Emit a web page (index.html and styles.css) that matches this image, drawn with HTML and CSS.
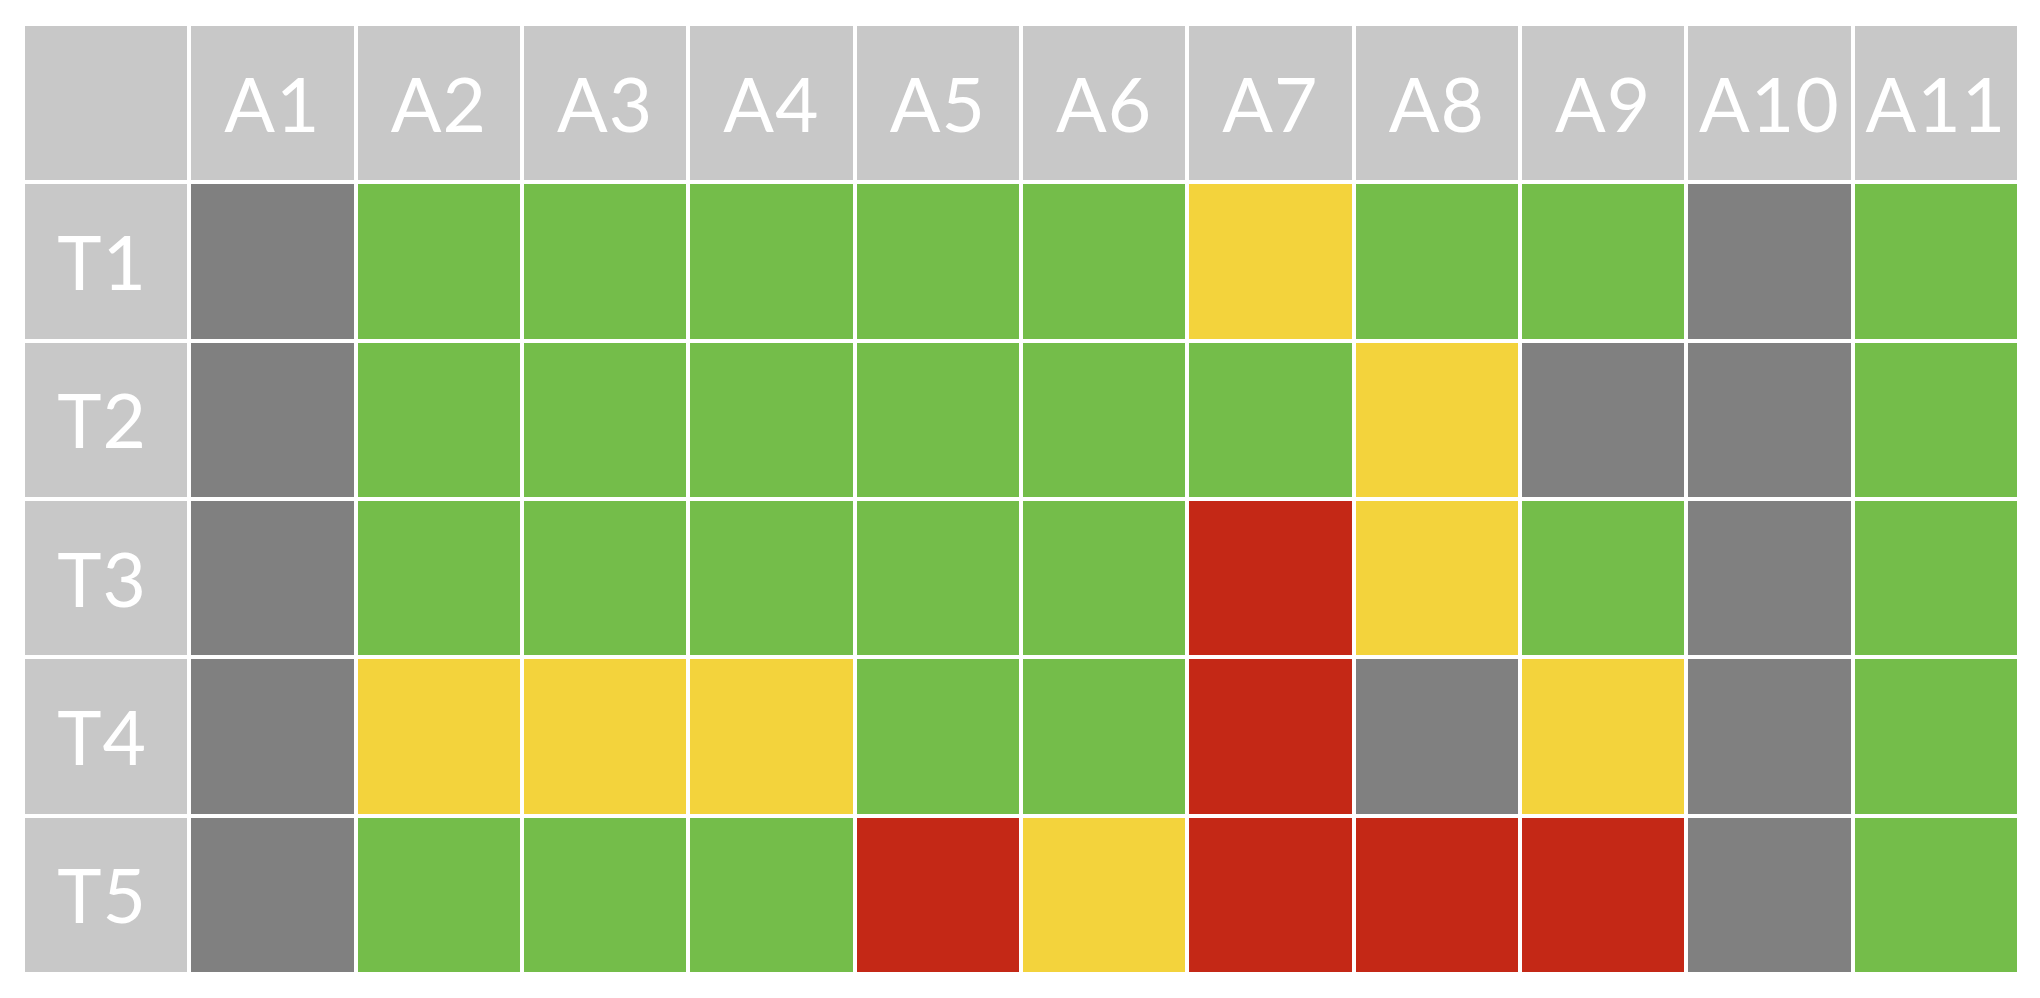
FILE: index.html
```html
<!DOCTYPE html>
<html lang="en">
<head>
<meta charset="utf-8">
<title>Matrix</title>
<link rel="stylesheet" href="styles.css">
</head>
<body>
<div class="grid">
  <div class="cell head"></div>
  <div class="cell head">A1</div>
  <div class="cell head">A2</div>
  <div class="cell head">A3</div>
  <div class="cell head">A4</div>
  <div class="cell head">A5</div>
  <div class="cell head">A6</div>
  <div class="cell head">A7</div>
  <div class="cell head">A8</div>
  <div class="cell head">A9</div>
  <div class="cell head">A10</div>
  <div class="cell head">A11</div>

  <div class="cell head row">T1</div>
  <div class="cell d"></div><div class="cell g"></div><div class="cell g"></div><div class="cell g"></div><div class="cell g"></div><div class="cell g"></div><div class="cell y"></div><div class="cell g"></div><div class="cell g"></div><div class="cell d"></div><div class="cell g"></div>

  <div class="cell head row">T2</div>
  <div class="cell d"></div><div class="cell g"></div><div class="cell g"></div><div class="cell g"></div><div class="cell g"></div><div class="cell g"></div><div class="cell g"></div><div class="cell y"></div><div class="cell d"></div><div class="cell d"></div><div class="cell g"></div>

  <div class="cell head row">T3</div>
  <div class="cell d"></div><div class="cell g"></div><div class="cell g"></div><div class="cell g"></div><div class="cell g"></div><div class="cell g"></div><div class="cell r"></div><div class="cell y"></div><div class="cell g"></div><div class="cell d"></div><div class="cell g"></div>

  <div class="cell head row">T4</div>
  <div class="cell d"></div><div class="cell y"></div><div class="cell y"></div><div class="cell y"></div><div class="cell g"></div><div class="cell g"></div><div class="cell r"></div><div class="cell d"></div><div class="cell y"></div><div class="cell d"></div><div class="cell g"></div>

  <div class="cell head row">T5</div>
  <div class="cell d"></div><div class="cell g"></div><div class="cell g"></div><div class="cell g"></div><div class="cell r"></div><div class="cell y"></div><div class="cell r"></div><div class="cell r"></div><div class="cell r"></div><div class="cell d"></div><div class="cell g"></div>
</div>
</body>
</html>
```

FILE: styles.css
```css
html, body {
  margin: 0;
  padding: 0;
  background: #ffffff;
}

body {
  padding: 26px 0 0 25px;
  font-family: "Lato", "Open Sans", "DejaVu Sans", sans-serif;
}

.grid {
  width: 1992px;
  height: 946px;
  display: grid;
  grid-template-columns: repeat(12, 1fr);
  grid-template-rows: repeat(6, 1fr);
  gap: 4px;
}

.cell {
  display: flex;
  align-items: center;
  justify-content: center;
  color: #ffffff;
  font-size: 75px;
  font-weight: 400;
  letter-spacing: 1px;
  line-height: 1;
}

.head { background: #c8c8c8; }
.row { padding-right: 8px; }
.d { background: #808080; }
.g { background: #74bd4a; }
.y { background: #f3d33c; }
.r { background: #c42816; }
```
